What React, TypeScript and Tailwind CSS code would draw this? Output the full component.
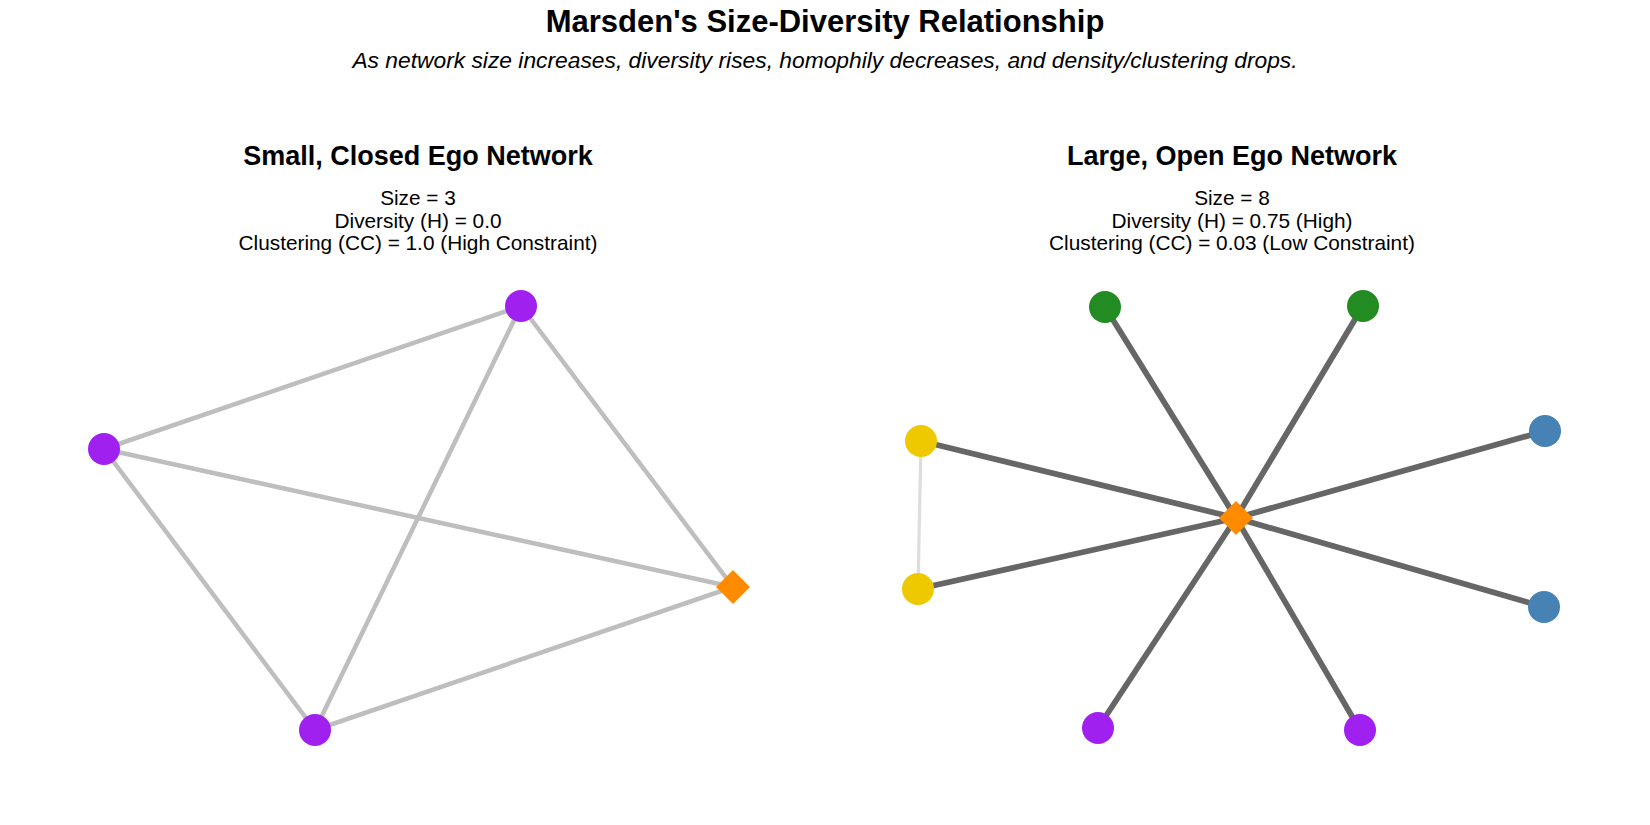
import React from "react";

type Node = { x: number; y: number; c: string };

const PURPLE = "#a020f0";
const ORANGE = "#ff8c00";
const GREEN = "#228b22";
const YELLOW = "#eec900";
const BLUE = "#4682b4";

function Diamond({ x, y, s }: { x: number; y: number; s: number }) {
  return (
    <polygon
      points={`${x},${y - s} ${x + s},${y} ${x},${y + s} ${x - s},${y}`}
      fill={ORANGE}
    />
  );
}

function SmallNet() {
  const ego = { x: 722, y: 332 };
  const alters: Node[] = [
    { x: 510, y: 51, c: PURPLE },
    { x: 93, y: 194, c: PURPLE },
    { x: 304, y: 475, c: PURPLE },
  ];
  const pts = [ego, ...alters];
  const edges: [number, number][] = [];
  for (let i = 0; i < pts.length; i++)
    for (let j = i + 1; j < pts.length; j++) edges.push([i, j]);
  return (
    <svg width={814} height={570} viewBox="0 0 814 570" className="block">
      {edges.map(([a, b], k) => (
        <line
          key={k}
          x1={pts[a].x}
          y1={pts[a].y}
          x2={pts[b].x}
          y2={pts[b].y}
          stroke="#bebebe"
          strokeWidth={4.5}
        />
      ))}
      {alters.map((n, k) => (
        <circle key={k} cx={n.x} cy={n.y} r={16} fill={n.c} />
      ))}
      <Diamond x={ego.x} y={ego.y} s={17} />
    </svg>
  );
}

function LargeNet() {
  const ego = { x: 411, y: 263 };
  const alters: Node[] = [
    { x: 280, y: 52, c: GREEN },
    { x: 538, y: 51, c: GREEN },
    { x: 96, y: 186, c: YELLOW },
    { x: 93, y: 334, c: YELLOW },
    { x: 720, y: 176, c: BLUE },
    { x: 719, y: 352, c: BLUE },
    { x: 273, y: 473, c: PURPLE },
    { x: 535, y: 475, c: PURPLE },
  ];
  return (
    <svg width={814} height={570} viewBox="0 0 814 570" className="block">
      <line
        x1={alters[2].x}
        y1={alters[2].y}
        x2={alters[3].x}
        y2={alters[3].y}
        stroke="#dddddd"
        strokeWidth={3.2}
      />
      {alters.map((n, k) => (
        <line
          key={k}
          x1={ego.x}
          y1={ego.y}
          x2={n.x}
          y2={n.y}
          stroke="#666666"
          strokeWidth={5.8}
        />
      ))}
      {alters.map((n, k) => (
        <circle key={k} cx={n.x} cy={n.y} r={16} fill={n.c} />
      ))}
      <Diamond x={ego.x} y={ego.y} s={17} />
    </svg>
  );
}

function Panel({
  title,
  lines,
  children,
}: {
  title: string;
  lines: string[];
  children: React.ReactNode;
}) {
  return (
    <div className="flex flex-col items-center">
      <h2 className="text-[27px] leading-[32px] font-bold text-black whitespace-nowrap">
        {title}
      </h2>
      <div className="mt-[15px] flex flex-col items-center text-[20.8px] leading-[22.5px] text-black">
        {lines.map((l) => (
          <div key={l} className="whitespace-nowrap">
            {l}
          </div>
        ))}
      </div>
      {children}
    </div>
  );
}

export default function App() {
  return (
    <div
      className="w-[1650px] h-[825px] bg-white overflow-hidden"
      style={{ fontFamily: '"Liberation Sans", Arial, sans-serif' }}
    >
      <div className="pt-[4px] flex flex-col items-center">
        <h1 className="text-[31px] leading-[36px] font-bold text-black">
          Marsden's Size-Diversity Relationship
        </h1>
        <p className="mt-[6px] text-[22.8px] leading-[28px] italic text-black">
          As network size increases, diversity rises, homophily decreases, and
          density/clustering drops.
        </p>
      </div>
      <div className="mt-[66px] grid grid-cols-2 px-[11px]">
        <Panel
          title="Small, Closed Ego Network"
          lines={[
            "Size = 3",
            "Diversity (H) = 0.0",
            "Clustering (CC) = 1.0 (High Constraint)",
          ]}
        >
          <SmallNet />
        </Panel>
        <Panel
          title="Large, Open Ego Network"
          lines={[
            "Size = 8",
            "Diversity (H) = 0.75 (High)",
            "Clustering (CC) = 0.03 (Low Constraint)",
          ]}
        >
          <LargeNet />
        </Panel>
      </div>
    </div>
  );
}
